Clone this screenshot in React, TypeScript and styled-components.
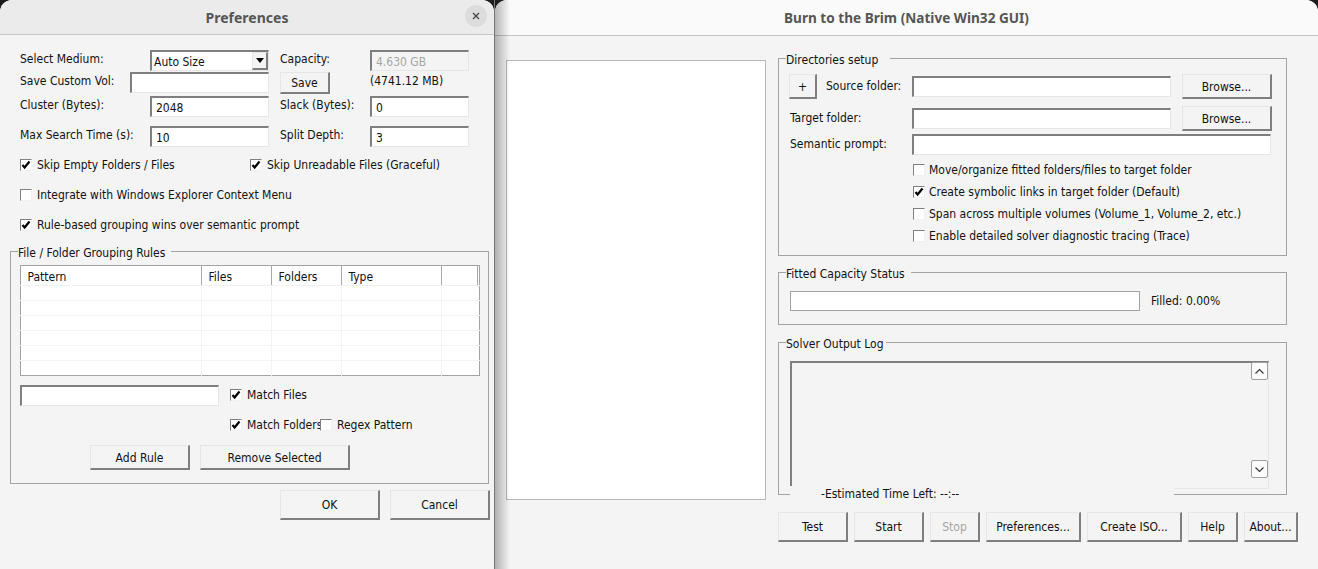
import React from 'react';
import styled, { createGlobalStyle } from 'styled-components';

const GlobalStyle = createGlobalStyle`
  html, body {
    margin: 0;
    padding: 0;
    background: #1c1c1c;
  }
  * {
    box-sizing: border-box;
  }
`;

const Desktop = styled.div`
  display: flex;
  width: 1318px;
  height: 569px;
  overflow: hidden;
  font-family: "DejaVu Sans Condensed", "Noto Sans", "Liberation Sans", sans-serif;
  font-size: 12px;
  color: #111;
`;

const Window = styled.div<{ $width?: number }>`
  position: relative;
  display: flex;
  flex-direction: column;
  flex: ${props => (props.$width ? `0 0 ${props.$width}px` : '1')};
  background: #f4f4f4;
  border-radius: 12px 12px 0 0;
  overflow: hidden;
`;

const DialogEdge = styled.div`
  flex: 0 0 1px;
  background: #777;
`;

const Shadow = styled.div`
  position: absolute;
  top: 0;
  left: 0;
  width: 15px;
  height: 100%;
  background: linear-gradient(90deg, rgba(0, 0, 0, 0.28), rgba(0, 0, 0, 0));
  pointer-events: none;
`;

const TitleBar = styled.div<{ $height: number; $light?: boolean }>`
  position: relative;
  flex: 0 0 ${props => props.$height}px;
  display: flex;
  align-items: center;
  justify-content: center;
  background: ${props => (props.$light ? '#fafafa' : '#ebebeb')};
  border-bottom: 1px solid #c6c6c6;
  font-family: "Noto Sans", sans-serif;
  font-size: ${props => (props.$light ? '13.6px' : '14px')};
  font-weight: 700;
  color: #555;
`;

const CloseButton = styled.button`
  position: absolute;
  top: 5px;
  right: 7px;
  display: flex;
  align-items: center;
  justify-content: center;
  width: 22px;
  height: 22px;
  padding: 0;
  border: none;
  border-radius: 50%;
  background: #dcdcdc;
  color: #444;
`;

const WinButton = styled.button<{ $width: number; $height: number; $disabled?: boolean }>`
  flex: 0 0 ${props => props.$width}px;
  width: ${props => props.$width}px;
  height: ${props => props.$height}px;
  padding: 1px 0 0;
  font: inherit;
  color: ${props => (props.$disabled ? '#a6a6a6' : '#111')};
  background: #f4f4f4;
  border-style: solid;
  border-width: 1px 2px 2px 1px;
  border-color: #e6e6e6 #7f7f7f #7f7f7f #e6e6e6;
`;

const TextBox = styled.input<{ $width: number; $height?: number; $disabled?: boolean }>`
  flex: 0 0 ${props => props.$width}px;
  width: ${props => props.$width}px;
  height: ${props => props.$height ?? 21}px;
  padding: 1px 0 0 4px;
  font: inherit;
  color: ${props => (props.$disabled ? '#a6a6a6' : '#111')};
  background: ${props => (props.$disabled ? '#f4f4f4' : '#fff')};
  border-style: solid;
  border-width: 2px 1px 1px 2px;
  border-color: #7f7f7f #e6e6e6 #e6e6e6 #7f7f7f;
  outline: none;
`;

const ComboBox = styled.div`
  flex: 0 0 119px;
  display: flex;
  align-items: center;
  justify-content: space-between;
  height: 21px;
  padding-left: 2px;
  background: #fff;
  border-style: solid;
  border-width: 2px 1px 1px 2px;
  border-color: #7f7f7f #e6e6e6 #e6e6e6 #7f7f7f;
`;

const ComboText = styled.span`
  margin-top: 2px;
`;

const ComboArrow = styled.div`
  display: flex;
  align-items: center;
  justify-content: center;
  width: 16px;
  height: 18px;
  background: #f4f4f4;
  border-style: solid;
  border-width: 1px 2px 2px 1px;
  border-color: #e6e6e6 #7f7f7f #7f7f7f #e6e6e6;
`;

const FieldLabel = styled.span<{ $width?: number; $drop?: number; $indent?: number }>`
  flex: 0 0 ${props => (props.$width ? `${props.$width}px` : 'auto')};
  align-self: flex-start;
  margin-top: ${props => (props.$drop ?? 0) + 1}px;
  margin-left: ${props => props.$indent ?? 0}px;
  line-height: 17px;
  white-space: nowrap;
`;

const Box = styled.span`
  flex: 0 0 12px;
  display: flex;
  width: 12px;
  height: 12px;
  background: #fff;
  border-style: solid;
  border-width: 1px;
  border-color: #808080 #f0f0f0 #f0f0f0 #808080;
`;

const CheckRow = styled.label<{ $gap: number }>`
  display: inline-flex;
  align-items: center;
  gap: ${props => props.$gap}px;
  line-height: 16px;
  white-space: nowrap;
`;

const Check = ({ label, checked, gap = 5 }: { label: string; checked?: boolean; gap?: number }) => (
  <CheckRow $gap={gap}>
    <Box>
      {checked && (
        <svg width="10" height="10" viewBox="0 0 10 10">
          <path d="M1.5 5 L3.6 7.5 L8.5 1.5" fill="none" stroke="#000" strokeWidth="2.2" />
        </svg>
      )}
    </Box>
    {label}
  </CheckRow>
);

const Group = styled.section<{ $height: number; $top?: number; $width: number }>`
  position: relative;
  flex: 0 0 ${props => props.$height}px;
  width: ${props => props.$width}px;
  margin-top: ${props => props.$top ?? 0}px;
  border: 1px solid #a3a3a3;
`;

const Legend = styled.span<{ $pad?: number }>`
  position: absolute;
  top: -7px;
  left: 7px;
  padding-right: ${props => props.$pad ?? 6}px;
  line-height: 16px;
  background: #f4f4f4;
  white-space: nowrap;
`;

/* preferences dialog */

const PrefBody = styled.div`
  display: flex;
  flex-direction: column;
  padding: 15px 0 0 20px;
`;

const PrefRow = styled.div<{ $top?: number; $height?: number }>`
  display: flex;
  height: ${props => props.$height ?? 21}px;
  margin-top: ${props => props.$top ?? 0}px;
`;

const CheckLine = styled.div<{ $top?: number }>`
  display: flex;
  align-items: center;
  height: 16px;
  margin-top: ${props => props.$top ?? 0}px;
`;

const Spacer = styled.div<{ $width: number }>`
  flex: 0 0 ${props => props.$width}px;
`;

const RulesGroup = styled(Group)`
  margin-left: -10px;
  padding: 13px 0 0 9px;
`;

const RuleTable = styled.table`
  width: 460px;
  height: 110px;
  table-layout: fixed;
  border-collapse: collapse;
  border: 1px solid #a3a3a3;
  background: #fff;
`;

const HeadCell = styled.th<{ $width?: number; $plain?: boolean }>`
  width: ${props => (props.$width ? `${props.$width}px` : 'auto')};
  height: 20px;
  padding: 2px 0 0 6.5px;
  font-weight: 400;
  text-align: left;
  border-bottom: 1px solid #f0f0f0;
  border-right: ${props => (props.$plain ? 'none' : '1px solid #a8a8a8')};
`;

const BodyCell = styled.td<{ $plain?: boolean }>`
  height: 15px;
  padding: 0;
  border-top: 1px solid #f3f3f3;
  border-right: ${props => (props.$plain ? 'none' : '1px solid #f3f3f3')};
`;

const RuleForm = styled.div`
  display: flex;
  margin-top: 9px;
`;

const RuleChecks = styled.div`
  display: flex;
  flex-direction: column;
  gap: 14px;
  margin: 2px 0 0 11px;
`;

const RuleButtons = styled.div`
  display: flex;
  gap: 10px;
  margin: 12px 0 0 70px;
`;

const FolderCheck = styled.div`
  display: flex;
  & > label:first-child {
    flex: 0 0 90px;
    min-width: 0;
  }
`;

const DialogActions = styled.div`
  display: flex;
  justify-content: flex-end;
  gap: 10px;
  margin: 6px 0 0 0;
  padding-right: 4px;
`;

/* main window */

const MainBody = styled.div`
  display: flex;
  gap: 12px;
  padding: 24px 0 0 11px;
`;

const BlankPanel = styled.div`
  flex: 0 0 260px;
  height: 440px;
  background: #fff;
  border: 1px solid #b8b8b8;
`;

const RightColumn = styled.div`
  display: flex;
  flex-direction: column;
  margin-top: -2px;
`;

const DirGrid = styled.div`
  display: grid;
  grid-template-columns: 123px 259px 101px;
  grid-template-rows: 32px 28px 21px;
  align-items: start;
  padding: 15px 0 0 10px;
`;

const DirCell = styled.div<{ $span?: number; $height?: number }>`
  display: flex;
  align-items: center;
  gap: 9px;
  height: ${props => props.$height ?? 25}px;
  grid-column: ${props => (props.$span ? `span ${props.$span}` : 'auto')};
`;

const BrowseCell = styled.div`
  margin-left: 11px;
`;

const DirChecks = styled.div`
  display: flex;
  flex-direction: column;
  align-items: flex-start;
  gap: 6px;
  padding: 7px 0 0 134px;
`;

const CapacityRow = styled.div`
  display: flex;
  align-items: center;
  gap: 11px;
  padding: 18px 0 0 11px;
`;

const CapacityBar = styled.div`
  flex: 0 0 350px;
  height: 20px;
  background: #fff;
  border: 1px solid #a3a3a3;
`;

const LogBox = styled.div`
  position: relative;
  width: 479px;
  height: 128px;
  margin: 18px 0 0 11px;
  border-style: solid;
  border-width: 2px 1px 1px 2px;
  border-color: #7f7f7f #e6e6e6 #e6e6e6 #7f7f7f;
`;

const ScrollButton = styled.div<{ $down?: boolean }>`
  position: absolute;
  right: 0;
  top: ${props => (props.$down ? '97px' : '-1px')};
  display: flex;
  align-items: center;
  justify-content: center;
  width: 17px;
  height: 18px;
  background: #fbfbfb;
  border: 1px solid #a0a0a0;
  border-radius: 2px;
`;

const TimeLegend = styled.span`
  position: absolute;
  bottom: -8px;
  left: 11px;
  width: 384px;
  padding-left: 31px;
  line-height: 16px;
  background: #f4f4f4;
  white-space: nowrap;
`;

const Toolbar = styled.div`
  display: flex;
  gap: 6px;
  margin-top: 17px;
`;

const Chevron = ({ up }: { up?: boolean }) => (
  <svg width="11" height="7" viewBox="0 0 11 7">
    <path d={up ? 'M1.5 5.5 L5.5 1.5 L9.5 5.5' : 'M1.5 1.5 L5.5 5.5 L9.5 1.5'} fill="none" stroke="#333" strokeWidth="1.1" />
  </svg>
);

const ruleRows = [0, 1, 2, 3, 4, 5];
const ruleCols = [0, 1, 2, 3, 4, 5];

export default function App() {
  return (
    <Desktop>
      <GlobalStyle />
      <Window $width={494}>
        <TitleBar $height={35}>
          Preferences
          <CloseButton>
            <svg width="10" height="10" viewBox="0 0 10 10">
              <path d="M2 2 L8 8 M8 2 L2 8" stroke="#444" strokeWidth="1.3" />
            </svg>
          </CloseButton>
        </TitleBar>
        <PrefBody>
          <PrefRow>
            <FieldLabel $width={130}>Select Medium:</FieldLabel>
            <ComboBox>
              <ComboText>Auto Size</ComboText>
              <ComboArrow>
                <svg width="8" height="5" viewBox="0 0 8 5">
                  <path d="M0 0 H8 L4 5 Z" fill="#000" />
                </svg>
              </ComboArrow>
            </ComboBox>
            <Spacer $width={11} />
            <FieldLabel $width={90}>Capacity:</FieldLabel>
            <TextBox $width={99} $disabled disabled value="4.630 GB" readOnly />
          </PrefRow>
          <PrefRow $top={1}>
            <FieldLabel $width={110}>Save Custom Vol:</FieldLabel>
            <TextBox $width={139} readOnly value="" />
            <Spacer $width={11} />
            <WinButton $width={50} $height={22}>Save</WinButton>
            <Spacer $width={40} />
            <FieldLabel>(4741.12 MB)</FieldLabel>
          </PrefRow>
          <PrefRow $top={3}>
            <FieldLabel $width={130}>Cluster (Bytes):</FieldLabel>
            <TextBox $width={119} readOnly value="2048" />
            <Spacer $width={11} />
            <FieldLabel $width={90}>Slack (Bytes):</FieldLabel>
            <TextBox $width={99} readOnly value="0" />
          </PrefRow>
          <PrefRow $top={9}>
            <FieldLabel $width={130}>Max Search Time (s):</FieldLabel>
            <TextBox $width={119} readOnly value="10" />
            <Spacer $width={11} />
            <FieldLabel $width={90}>Split Depth:</FieldLabel>
            <TextBox $width={99} readOnly value="3" />
          </PrefRow>
          <CheckLine $top={10}>
            <Spacer $width={230}><Check label="Skip Empty Folders / Files" checked /></Spacer>
            <Check label="Skip Unreadable Files (Graceful)" checked />
          </CheckLine>
          <CheckLine $top={14}>
            <Check label="Integrate with Windows Explorer Context Menu" />
          </CheckLine>
          <CheckLine $top={14}>
            <Check label="Rule-based grouping wins over semantic prompt" checked />
          </CheckLine>
          <RulesGroup $width={479} $height={233} $top={18}>
            <Legend>File / Folder Grouping Rules</Legend>
            <RuleTable>
              <thead>
                <tr>
                  <HeadCell $width={181}>Pattern</HeadCell>
                  <HeadCell $width={70}>Files</HeadCell>
                  <HeadCell $width={70}>Folders</HeadCell>
                  <HeadCell $width={100}>Type</HeadCell>
                  <HeadCell $width={36} />
                  <HeadCell $plain />
                </tr>
              </thead>
              <tbody>
                {ruleRows.map(row => (
                  <tr key={row}>
                    {ruleCols.map(col => (
                      <BodyCell key={col} $plain={col >= 4} />
                    ))}
                  </tr>
                ))}
              </tbody>
            </RuleTable>
            <RuleForm>
              <TextBox $width={199} readOnly value="" />
              <RuleChecks>
                <Check label="Match Files" checked />
                <FolderCheck>
                  <Check label="Match Folders" checked />
                  <Check label="Regex Pattern" />
                </FolderCheck>
              </RuleChecks>
            </RuleForm>
            <RuleButtons>
              <WinButton $width={100} $height={25}>Add Rule</WinButton>
              <WinButton $width={150} $height={25}>Remove Selected</WinButton>
            </RuleButtons>
          </RulesGroup>
          <DialogActions>
            <WinButton $width={100} $height={30}>OK</WinButton>
            <WinButton $width={100} $height={30}>Cancel</WinButton>
          </DialogActions>
        </PrefBody>
      </Window>
      <DialogEdge />
      <Window>
        <TitleBar $height={36} $light>Burn to the Brim (Native Win32 GUI)</TitleBar>
        <MainBody>
          <BlankPanel />
          <RightColumn>
            <Group $width={509} $height={198}>
              <Legend $pad={12}>Directories setup</Legend>
              <DirGrid>
                <DirCell>
                  <WinButton $width={28} $height={25}>+</WinButton>
                  <FieldLabel $drop={3}>Source folder:</FieldLabel>
                </DirCell>
                <DirCell>
                  <TextBox $width={259} readOnly value="" />
                </DirCell>
                <BrowseCell><WinButton $width={90} $height={25}>Browse...</WinButton></BrowseCell>
                <DirCell>
                  <FieldLabel $drop={3} $indent={1}>Target folder:</FieldLabel>
                </DirCell>
                <DirCell>
                  <TextBox $width={259} readOnly value="" />
                </DirCell>
                <BrowseCell><WinButton $width={90} $height={25}>Browse...</WinButton></BrowseCell>
                <DirCell $height={21}>
                  <FieldLabel $drop={1} $indent={1}>Semantic prompt:</FieldLabel>
                </DirCell>
                <DirCell $span={2} $height={21}>
                  <TextBox $width={359} readOnly value="" />
                </DirCell>
              </DirGrid>
              <DirChecks>
                <Check gap={4} label="Move/organize fitted folders/files to target folder" />
                <Check gap={4} label="Create symbolic links in target folder (Default)" checked />
                <Check gap={4} label="Span across multiple volumes (Volume_1, Volume_2, etc.)" />
                <Check gap={4} label="Enable detailed solver diagnostic tracing (Trace)" />
              </DirChecks>
            </Group>
            <Group $width={509} $height={53} $top={16}>
              <Legend>Fitted Capacity Status</Legend>
              <CapacityRow>
                <CapacityBar />
                <span>Filled: 0.00%</span>
              </CapacityRow>
            </Group>
            <Group $width={509} $height={153} $top={17}>
              <Legend $pad={2}>Solver Output Log</Legend>
              <LogBox>
                <ScrollButton><Chevron up /></ScrollButton>
                <ScrollButton $down><Chevron /></ScrollButton>
              </LogBox>
              <TimeLegend>-Estimated Time Left: --:--</TimeLegend>
            </Group>
            <Toolbar>
              <WinButton $width={70} $height={30}>Test</WinButton>
              <WinButton $width={70} $height={30}>Start</WinButton>
              <WinButton $width={50} $height={30} $disabled>Stop</WinButton>
              <WinButton $width={95} $height={30}>Preferences...</WinButton>
              <WinButton $width={95} $height={30}>Create ISO...</WinButton>
              <WinButton $width={50} $height={30}>Help</WinButton>
              <WinButton $width={54} $height={30}>About...</WinButton>
            </Toolbar>
          </RightColumn>
        </MainBody>
        <Shadow />
      </Window>
    </Desktop>
  );
}
